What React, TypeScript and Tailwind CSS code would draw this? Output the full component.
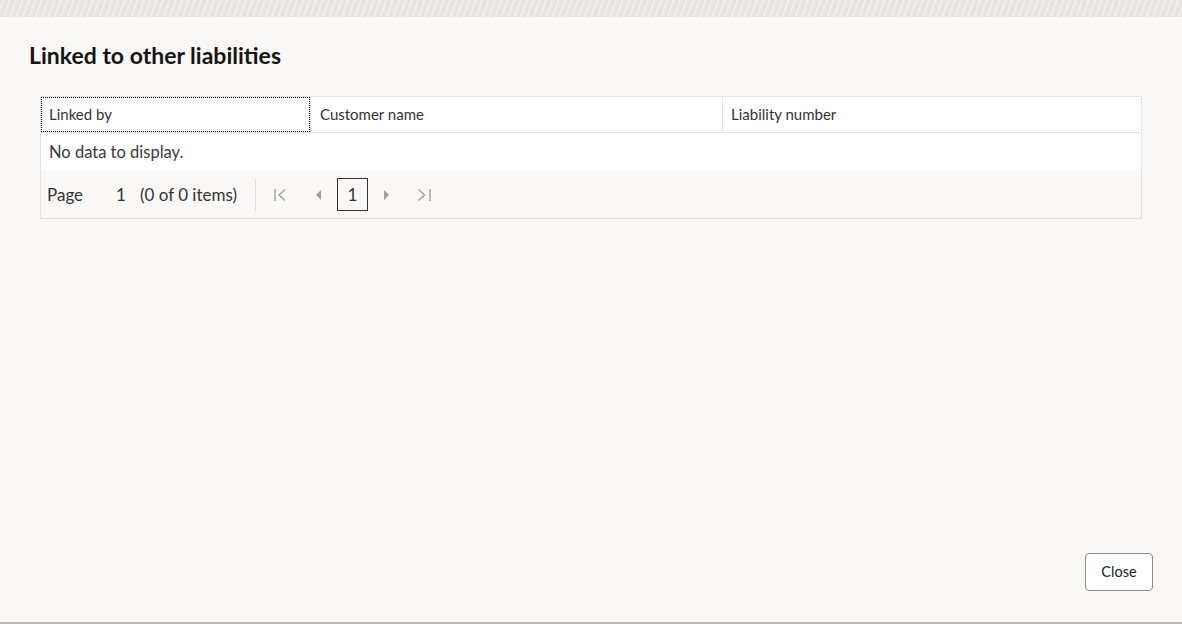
import React from "react";

export default function App() {
  return (
    <div className="w-[1182px] h-[624px] flex flex-col bg-[#f9f8f6] overflow-hidden" style={{ fontFamily: "Lato, 'Noto Sans', sans-serif" }}>
      <div className="h-[17px] shrink-0 bg-[#ebeae9] bg-[repeating-linear-gradient(110deg,#e5e4e3_0px,#e5e4e3_2px,#f0efee_2px,#f0efee_4px,#e8e7e6_4px,#e8e7e6_6px)]" />
      <div className="flex-1 flex flex-col px-[29px] pt-[24px] pb-[31px] border-b-2 border-[#b8b8b8]">
        <h1 className="text-[23px] font-bold text-[#161513] leading-[28px]">Linked to other liabilities</h1>
        <div className="mt-[27px] ml-[11px] w-[1102px] border border-[#e3e3e3] bg-white">
          <div className="flex h-[36px] border-b border-[#e3e3e3] text-[15px] text-[#333]">
            <div className="w-[269px] flex items-center pl-[8px] outline outline-1 outline-dotted outline-black -outline-offset-1">Linked by</div>
            <div className="w-[412px] flex items-center pl-[9px] border-l border-[#e3e3e3]">Customer name</div>
            <div className="flex-1 flex items-center pl-[8px] border-l border-[#e3e3e3]">Liability number</div>
          </div>
          <div className="h-[38px] flex items-center pl-[8px] text-[16.5px] text-[#3a3a3a]">No data to display.</div>
          <div className="h-[47px] flex items-center bg-[#f9f8f6] text-[17px] text-[#333]">
            <span className="ml-[6px]">Page</span>
            <span className="ml-[33px]">1</span>
            <span className="ml-[14px]">(0 of 0 items)</span>
            <div className="ml-[18px] w-px h-[32px] bg-[#dcdcdc]" />
            <svg className="ml-[18px]" width="12" height="14" viewBox="0 0 12 14" fill="none" stroke="#a0a0a0" strokeWidth="1.4">
              <path d="M1 1v12" />
              <path d="M11 1.5L5 7l6 5.5" />
            </svg>
            <svg className="ml-[29px]" width="7" height="12" viewBox="0 0 7 12" fill="#a0a0a0">
              <path d="M6 1L1 6l5 5z" />
            </svg>
            <div className="ml-[15px] w-[31px] h-[33px] border border-[#333] flex items-center justify-center text-[17px]">1</div>
            <svg className="ml-[15px]" width="7" height="12" viewBox="0 0 7 12" fill="#a0a0a0">
              <path d="M1 1l5 5-5 5z" />
            </svg>
            <svg className="ml-[27px]" width="14" height="14" viewBox="0 0 14 14" fill="none" stroke="#a0a0a0" strokeWidth="1.4">
              <path d="M1.5 1.5L7.5 7l-6 5.5" />
              <path d="M13 1v12" />
            </svg>
          </div>
        </div>
        <div className="flex-1" />
        <div className="flex justify-end">
          <button className="w-[68px] h-[38px] border border-[#8a8a8a] rounded-[4px] bg-white text-[14.5px] text-[#222]">Close</button>
        </div>
      </div>
    </div>
  );
}
